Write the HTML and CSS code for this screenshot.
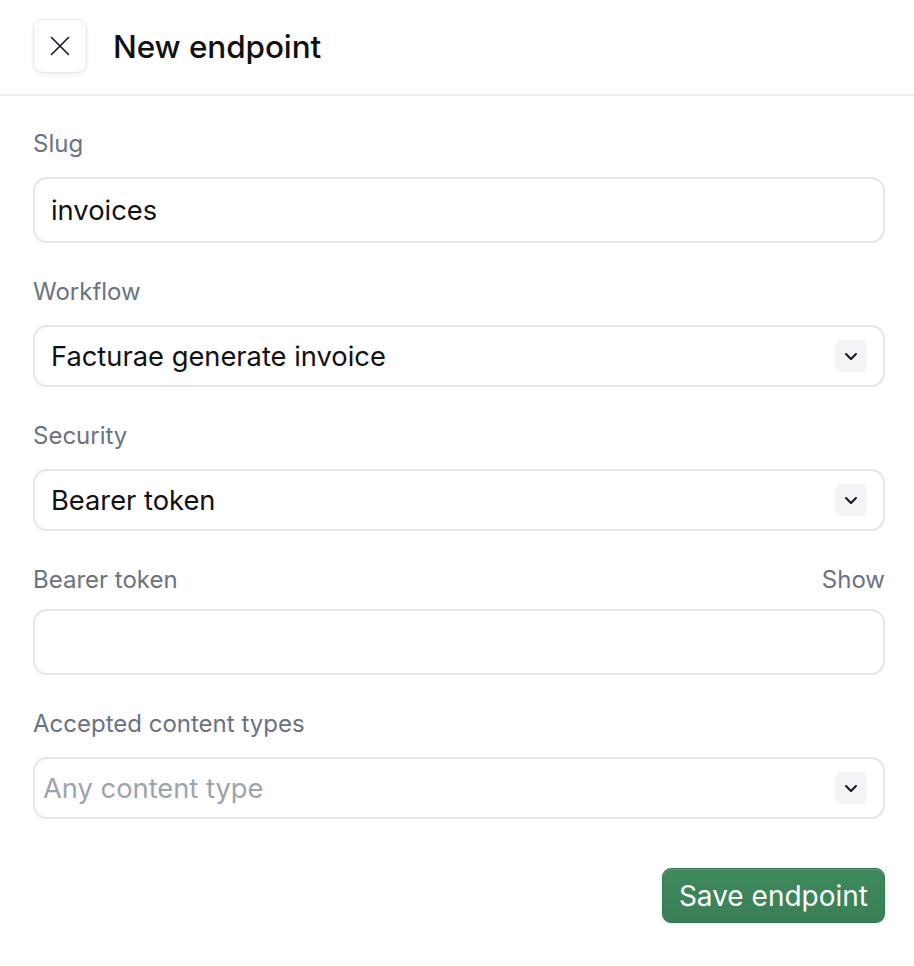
FILE: index.html
```html
<!DOCTYPE html>
<html lang="en">
<head>
<meta charset="utf-8">
<title>New endpoint</title>
<link rel="stylesheet" href="styles.css">
</head>
<body>
<header class="header">
  <button class="close-btn" type="button" aria-label="Close">
    <svg width="20" height="20" viewBox="0 0 20 20" fill="none" stroke="#111827" stroke-width="1.6" stroke-linecap="round"><path d="M1.5 1.5 18.5 18.5M18.5 1.5 1.5 18.5"/></svg>
  </button>
  <h1 class="title">New endpoint</h1>
</header>
<main class="form">
  <div class="field">
    <label class="label">Slug</label>
    <input class="control input" type="text" value="invoices">
  </div>
  <div class="field">
    <label class="label">Workflow</label>
    <div class="control select">
      <span class="select-text">Facturae generate invoice</span>
      <span class="chevron"><svg width="16" height="16" viewBox="0 0 16 16" fill="none" stroke="#111827" stroke-width="2" stroke-linecap="round" stroke-linejoin="round"><path d="M3 6 8 11 13 6"/></svg></span>
    </div>
  </div>
  <div class="field">
    <label class="label">Security</label>
    <div class="control select">
      <span class="select-text">Bearer token</span>
      <span class="chevron"><svg width="16" height="16" viewBox="0 0 16 16" fill="none" stroke="#111827" stroke-width="2" stroke-linecap="round" stroke-linejoin="round"><path d="M3 6 8 11 13 6"/></svg></span>
    </div>
  </div>
  <div class="field">
    <div class="label-row">
      <label class="label">Bearer token</label>
      <span class="show">Show</span>
    </div>
    <input class="control input" type="password" value="">
  </div>
  <div class="field">
    <label class="label">Accepted content types</label>
    <div class="control select multi">
      <span class="placeholder">Any content type</span>
      <span class="chevron"><svg width="16" height="16" viewBox="0 0 16 16" fill="none" stroke="#111827" stroke-width="2" stroke-linecap="round" stroke-linejoin="round"><path d="M3 6 8 11 13 6"/></svg></span>
    </div>
  </div>
  <div class="actions">
    <button class="save-btn" type="button">Save endpoint</button>
  </div>
</main>
</body>
</html>
```
FILE: styles.css
```css
* { box-sizing: border-box; }
html, body { margin: 0; padding: 0; background: #fff; }
body {
  font-family: Inter, "Noto Sans", "Liberation Sans", sans-serif;
  color: #111827;
}
.header {
  display: flex;
  align-items: center;
  gap: 26px;
  height: 96px;
  padding: 0 33px 2px;
  border-bottom: 2px solid #ececef;
}
.close-btn {
  width: 54px;
  height: 54px;
  display: flex;
  align-items: center;
  justify-content: center;
  background: #fff;
  border: 1.5px solid #e6e7ea;
  border-radius: 10px;
  box-shadow: 0 2px 5px rgba(0,0,0,0.06);
  padding: 0;
}
.title {
  margin: 0;
  font-size: 31.5px;
  font-weight: 500;
  color: #111;
  letter-spacing: -0.1px;
}
.form {
  padding: 34px 29px 0 33px;
  display: flex;
  flex-direction: column;
  gap: 35px;
}
.field {
  display: flex;
  flex-direction: column;
  gap: 19px;
}
.label {
  font-size: 24px;
  line-height: 28px;
  color: #6b7280;
  font-weight: 400;
}
.label-row {
  display: flex;
  justify-content: space-between;
  align-items: center;
  margin-bottom: -4px;
}
.show {
  font-size: 24px;
  line-height: 28px;
  color: #6b7280;
}
.control {
  width: 100%;
  border: 2px solid #e5e6ea;
  border-radius: 14px;
  background: #fff;
  font-family: inherit;
  font-size: 27.3px;
  color: #111;
}
.input {
  height: 66px;
  padding: 0 16px;
  outline: none;
}
.select {
  height: 62px;
  display: flex;
  align-items: center;
  justify-content: space-between;
  padding: 0 16px 0 16px;
}
.select.multi {
  padding-left: 8px;
}
.placeholder {
  color: #9ca3af;
}
.chevron {
  width: 32px;
  height: 32px;
  border-radius: 7px;
  background: #f3f4f6;
  display: flex;
  align-items: center;
  justify-content: center;
}
.actions {
  display: flex;
  justify-content: flex-end;
  margin-top: 14px;
}
.save-btn {
  height: 55px;
  padding: 0 16px;
  border: 1px solid #347a50;
  border-radius: 9px;
  background: linear-gradient(#3f8a5d, #397f55);
  color: #fff;
  font-family: inherit;
  font-size: 28px;
  font-weight: 400;
  box-shadow: inset 0 1px 0 rgba(255,255,255,0.18), 0 2px 4px rgba(0,0,0,0.12);
}
```
